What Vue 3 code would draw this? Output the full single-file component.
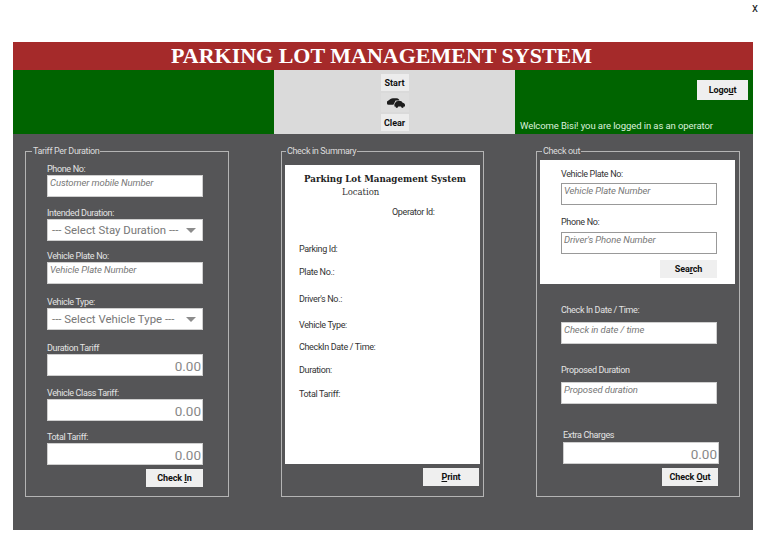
<script setup>
const tariffFields = [
  { label: 'Phone No:', kind: 'text', hint: 'Customer mobile Number', gap: 6 },
  { label: 'Intended Duration:', kind: 'select', hint: '--- Select Stay Duration ---', gap: 10 },
  { label: 'Vehicle Plate No:', kind: 'text', hint: 'Vehicle Plate Number', gap: 9 },
  { label: 'Vehicle Type:', kind: 'select', hint: '--- Select Vehicle Type ---', gap: 12 },
  { label: 'Duration Tariff', kind: 'money', hint: '0.00', gap: 12 },
  { label: 'Vehicle Class Tariff:', kind: 'money', hint: '0.00', gap: 11 },
  { label: 'Total Tariff:', kind: 'money', hint: '0.00', gap: 10 },
]

const summaryRows = [
  { label: 'Parking Id:', gap: 0 },
  { label: 'Plate No.:', gap: 11 },
  { label: "Driver's No.:", gap: 15 },
  { label: 'Vehicle Type:', gap: 14 },
  { label: 'CheckIn Date / Time:', gap: 10 },
  { label: 'Duration:', gap: 11 },
  { label: 'Total Tariff:', gap: 12 },
]
</script>

<template>
  <div class="page">
    <div class="topline"><span class="close">x</span></div>

    <div class="window">
      <h1 class="title">PARKING LOT MANAGEMENT SYSTEM</h1>

      <div class="band">
        <div class="band-side"></div>
        <div class="band-mid">
          <button class="mini">Start</button>
          <button class="mini mini--icon" aria-label="Cars">
            <svg class="cars" width="18" height="10" viewBox="0 0 18 10">
              <path d="M0 3.5 L3.5 1 Q4.5 0.2 6 0.2 L9.5 0.2 Q11 0.2 12 1.6 L12.6 2.6 L8.6 2.6 L6.4 6.8 L1.5 6.8 Q0 6.8 0 5.4 Z" fill="#1c1c1c"/>
              <path d="M7.4 6 L9.2 3.6 Q9.7 3.1 11 3.1 L13.4 3.1 Q14.5 3.1 15.4 4.4 L17 5.2 Q18 5.8 18 7 L18 8.6 L7.4 8.6 Z" fill="#1c1c1c"/>
              <circle cx="9.8" cy="8.6" r="1.3" fill="#1c1c1c"/>
              <circle cx="15.4" cy="8.6" r="1.3" fill="#1c1c1c"/>
            </svg>
          </button>
          <button class="mini">Clear</button>
        </div>
        <div class="band-user">
          <button class="btn logout">Logo<u>u</u>t</button>
          <span class="welcome">Welcome Bisi! you are logged in as an operator</span>
        </div>
      </div>

      <div class="panels">
        <fieldset class="panel panel--left">
          <legend>Tariff Per Duration</legend>
          <div
            v-for="f in tariffFields"
            :key="f.label"
            class="field"
            :style="{ marginTop: f.gap + 'px' }"
          >
            <label>{{ f.label }}</label>
            <div v-if="f.kind === 'text'" class="box box--text">{{ f.hint }}</div>
            <div v-else-if="f.kind === 'select'" class="box box--select">
              <span>{{ f.hint }}</span><i class="arrow"></i>
            </div>
            <div v-else class="box box--money">{{ f.hint }}</div>
          </div>
          <button class="btn action">Check <u>I</u>n</button>
        </fieldset>

        <fieldset class="panel panel--mid">
          <legend>Check in Summary</legend>
          <div class="receipt">
            <div class="receipt-name">Parking Lot Management System</div>
            <div class="receipt-loc">Location</div>
            <div class="receipt-op">Operator Id:</div>
            <div
              v-for="r in summaryRows"
              :key="r.label"
              class="receipt-row"
              :style="{ marginTop: r.gap + 'px' }"
            >{{ r.label }}</div>
          </div>
          <button class="btn action"><u>P</u>rint</button>
        </fieldset>

        <fieldset class="panel panel--right">
          <legend>Check out</legend>
          <div class="search-card">
            <div class="field">
              <label>Vehicle Plate No:</label>
              <div class="box box--text box--line">Vehicle Plate Number</div>
            </div>
            <div class="field field--phone">
              <label>Phone No:</label>
              <div class="box box--text box--line">Driver's Phone Number</div>
            </div>
            <button class="btn search">Sea<u>r</u>ch</button>
          </div>
          <div class="field field--checkin">
            <label>Check In Date / Time:</label>
            <div class="box box--text">Check in date / time</div>
          </div>
          <div class="field field--proposed">
            <label>Proposed Duration</label>
            <div class="box box--text">Proposed duration</div>
          </div>
          <div class="field field--extra">
            <label>Extra Charges</label>
            <div class="box box--money">0.00</div>
          </div>
          <button class="btn action action--out">Check <u>O</u>ut</button>
        </fieldset>
      </div>
    </div>
  </div>
</template>

<style scoped>
.page {
  width: 768px;
  height: 545px;
  background: #fff;
  font-family: Roboto, "Liberation Sans", Arial, sans-serif;
  overflow: hidden;
}

.topline {
  height: 42px;
  display: flex;
  justify-content: flex-end;
  padding-right: 10px;
  box-sizing: border-box;
}

.close {
  font-size: 12px;
  line-height: 16px;
  color: #222;
}

.window {
  width: 740px;
  height: 488px;
  margin-left: 13px;
  background: #555557;
}

.title {
  margin: 0;
  height: 28px;
  background: #a52a2a;
  color: #fff;
  font-family: "Liberation Serif", "Times New Roman", serif;
  font-size: 22px;
  font-weight: 700;
  line-height: 27px;
  text-align: center;
  padding-right: 3px;
}

.band {
  display: grid;
  grid-template-columns: 261px 241px 238px;
  height: 64px;
  background: #006400;
}

.band-mid {
  background: #dadada;
  display: flex;
  flex-direction: column;
  align-items: center;
  gap: 2px;
  padding: 4px 0 0 0;
  box-sizing: border-box;
}

.mini {
  width: 28px;
  height: 17px;
  padding: 0;
  border: 0;
  background: #ececec;
  color: #111;
  font-family: inherit;
  font-size: 9px;
  font-weight: 700;
}

.mini--icon {
  height: 19px;
  background: #dedede;
  display: flex;
  align-items: center;
  justify-content: center;
}

.cars {
  margin-left: 2px;
}

.band-user {
  display: flex;
  flex-direction: column;
  align-items: flex-start;
  padding: 10px 5px 0 5px;
  box-sizing: border-box;
}

.logout {
  align-self: flex-end;
  width: 51px;
  height: 20px;
}

.welcome {
  margin-top: 20px;
  color: #dcf0dc;
  font-size: 9.5px;
  line-height: 12px;
  letter-spacing: -0.09px;
}

.btn {
  padding: 0;
  border: 0;
  background: #efefef;
  color: #111;
  font-family: inherit;
  font-size: 9px;
  font-weight: 700;
  letter-spacing: -0.1px;
}

.panels {
  display: flex;
  gap: 52px;
  padding: 11px 0 0 12px;
}

.panel {
  width: 204px;
  height: 352px;
  margin: 0;
  padding: 0;
  border: 1px solid #b4b4b4;
  box-sizing: border-box;
  min-width: 0;
  display: flex;
  flex-direction: column;
}

.panel--mid {
  width: 203px;
}

legend {
  margin-left: 6px;
  padding: 0 1px;
  font-size: 9px;
  line-height: 12px;
  letter-spacing: -0.35px;
  color: #ddd;
}

.panel--mid legend {
  margin-left: 4px;
}

.panel--right legend {
  margin-left: 5px;
}

.field {
  display: flex;
  flex-direction: column;
  width: 156px;
}

.panel--left .field {
  margin-left: 21px;
}

.field label {
  font-size: 9px;
  line-height: 12px;
  letter-spacing: -0.35px;
  color: #e4e4e4;
}

.box {
  height: 22px;
  box-sizing: border-box;
  background: #fff;
  border: 1px solid #cfcfcf;
  color: #777;
  white-space: nowrap;
}

.box--text {
  font-size: 9.5px;
  font-style: italic;
  line-height: 14px;
  letter-spacing: -0.1px;
  padding: 0 2px;
}

.box--line {
  border-color: #999;
}

.box--select {
  display: flex;
  align-items: center;
  justify-content: space-between;
  padding: 0 6px 0 4px;
  font-size: 11.4px;
}

.arrow {
  width: 0;
  height: 0;
  border-left: 5px solid transparent;
  border-right: 5px solid transparent;
  border-top: 5px solid #8c8c8c;
}

.box--money {
  text-align: right;
  font-size: 13.5px;
  line-height: 22px;
  padding-right: 1px;
  color: #888;
}

.action {
  align-self: flex-end;
  width: 57px;
  height: 18px;
  margin: 4px 25px 0 0;
}

.receipt {
  width: 195px;
  height: 299px;
  background: #fff;
  color: #333;
  font-size: 9px;
  line-height: 12px;
  letter-spacing: -0.35px;
  margin: 8px 0 0 3px;
  padding: 8px 0 0 14px;
  box-sizing: border-box;
}

.receipt-name {
  margin-left: 5px;
  font-family: "DejaVu Serif", serif;
  font-size: 8.7px;
  font-weight: 700;
  letter-spacing: 0;
  color: #222;
  white-space: nowrap;
}

.receipt-loc {
  margin: 1px 0 0 43px;
  font-family: "DejaVu Serif", serif;
  font-size: 8.5px;
  letter-spacing: 0;
}

.receipt-op {
  margin: 8px 0 25px 93px;
}

.panel--mid .action {
  width: 56px;
  margin-right: 4px;
}

.search-card {
  width: 195px;
  height: 124px;
  margin: 3px 0 0 3px;
  padding: 7px 0 0 21px;
  box-sizing: border-box;
  background: #fff;
  display: flex;
  flex-direction: column;
}

.search-card label {
  color: #333;
  line-height: 14px;
  margin-bottom: 2px;
}

.field--phone {
  margin-top: 10px;
}

.field--phone label {
  margin-bottom: 3px;
}

.search {
  align-self: flex-start;
  width: 57px;
  height: 18px;
  margin: 6px 0 0 99px;
}

.field--checkin,
.field--proposed {
  margin: 20px 0 0 24px;
}

.field--checkin label,
.field--proposed label {
  margin-bottom: 6px;
}

.field--extra {
  margin: 25px 0 0 26px;
}

.field--extra label {
  margin-bottom: 1px;
}

.action--out {
  width: 56px;
  margin-right: 21px;
}
</style>

<style>
html, body { background: #fff; }
</style>
